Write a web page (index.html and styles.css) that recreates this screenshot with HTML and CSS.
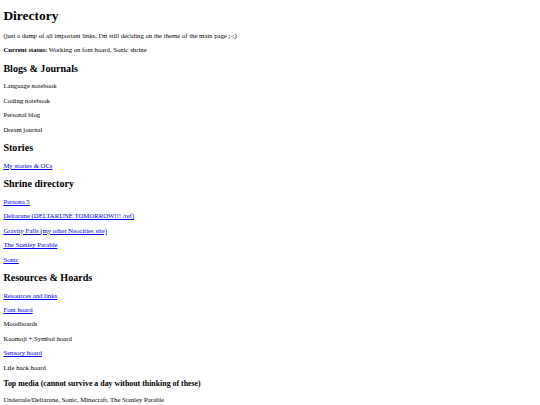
FILE: index.html
```html
<!DOCTYPE html>
<html lang="en">
<head>
  <meta charset="UTF-8">
  <meta name="viewport" content="width=device-width, initial-scale=1.0">
  <title>Directory</title>
  <link rel="stylesheet" href="styles.css">
</head>
<body>
  <h1>Directory</h1>
  <p>(just a dump of all important links, I'm still deciding on the theme of the main page ;-;)</p>
  <p><strong>Current status</strong>: Working on font hoard, Sonic shrine</p>

  <!-- BLOGS -->
  <h2>Blogs &amp; Journals</h2>
  <p>Language notebook</p>
  <p>Coding notebook</p>
  <p>Personal blog</p>
  <p>Dream journal</p>

  <!-- STORIES -->
  <h2>Stories</h2>
  <p><a href="#">My stories &amp; OCs</a></p>

  <!-- SHRINES -->
  <h2>Shrine directory</h2>
  <p><a href="#">Persona 5</a></p>
  <p><a href="#">Deltarune (DELTARUNE TOMORROW!!! /ref)</a></p>
  <p><a href="#">Gravity Falls (my other Neocities site)</a></p>
  <p><a href="#">The Stanley Parable</a></p>
  <p><a href="#">Sonic</a></p>

  <!-- HOARDS -->
  <h2>Resources &amp; Hoards</h2>
  <p><a href="#">Resources and links</a></p>
  <p><a href="#">Font hoard</a></p>
  <p>Moodboards</p>
  <p>Kaomoji + Symbol hoard</p>
  <p><a href="#">Sensory hoard</a></p>
  <p>Life hack hoard</p>

  <h3>Top media (cannot survive a day without thinking of these)</h3>
  <p>Undertale/Deltarune, Sonic, Minecraft, The Stanley Parable</p>
</body>
</html>
```

FILE: styles.css
```css
body {
  margin: 0 3.4px 3.4px;
  font-family: 'Liberation Serif', 'Times New Roman', serif;
  font-size: 6.72px;
  line-height: 1.149;
  color: #000;
  background: #fff;
}
h1 {
  font-size: 2em;
  margin: 7.6px 0 0.67em;
}
h2 {
  font-size: 1.5em;
  margin: 0.83em 0;
}
h3 {
  font-size: 1.17em;
  margin: 1em 0;
}
p {
  margin: 1em 0;
}
a {
  color: #0000ee;
}
```
